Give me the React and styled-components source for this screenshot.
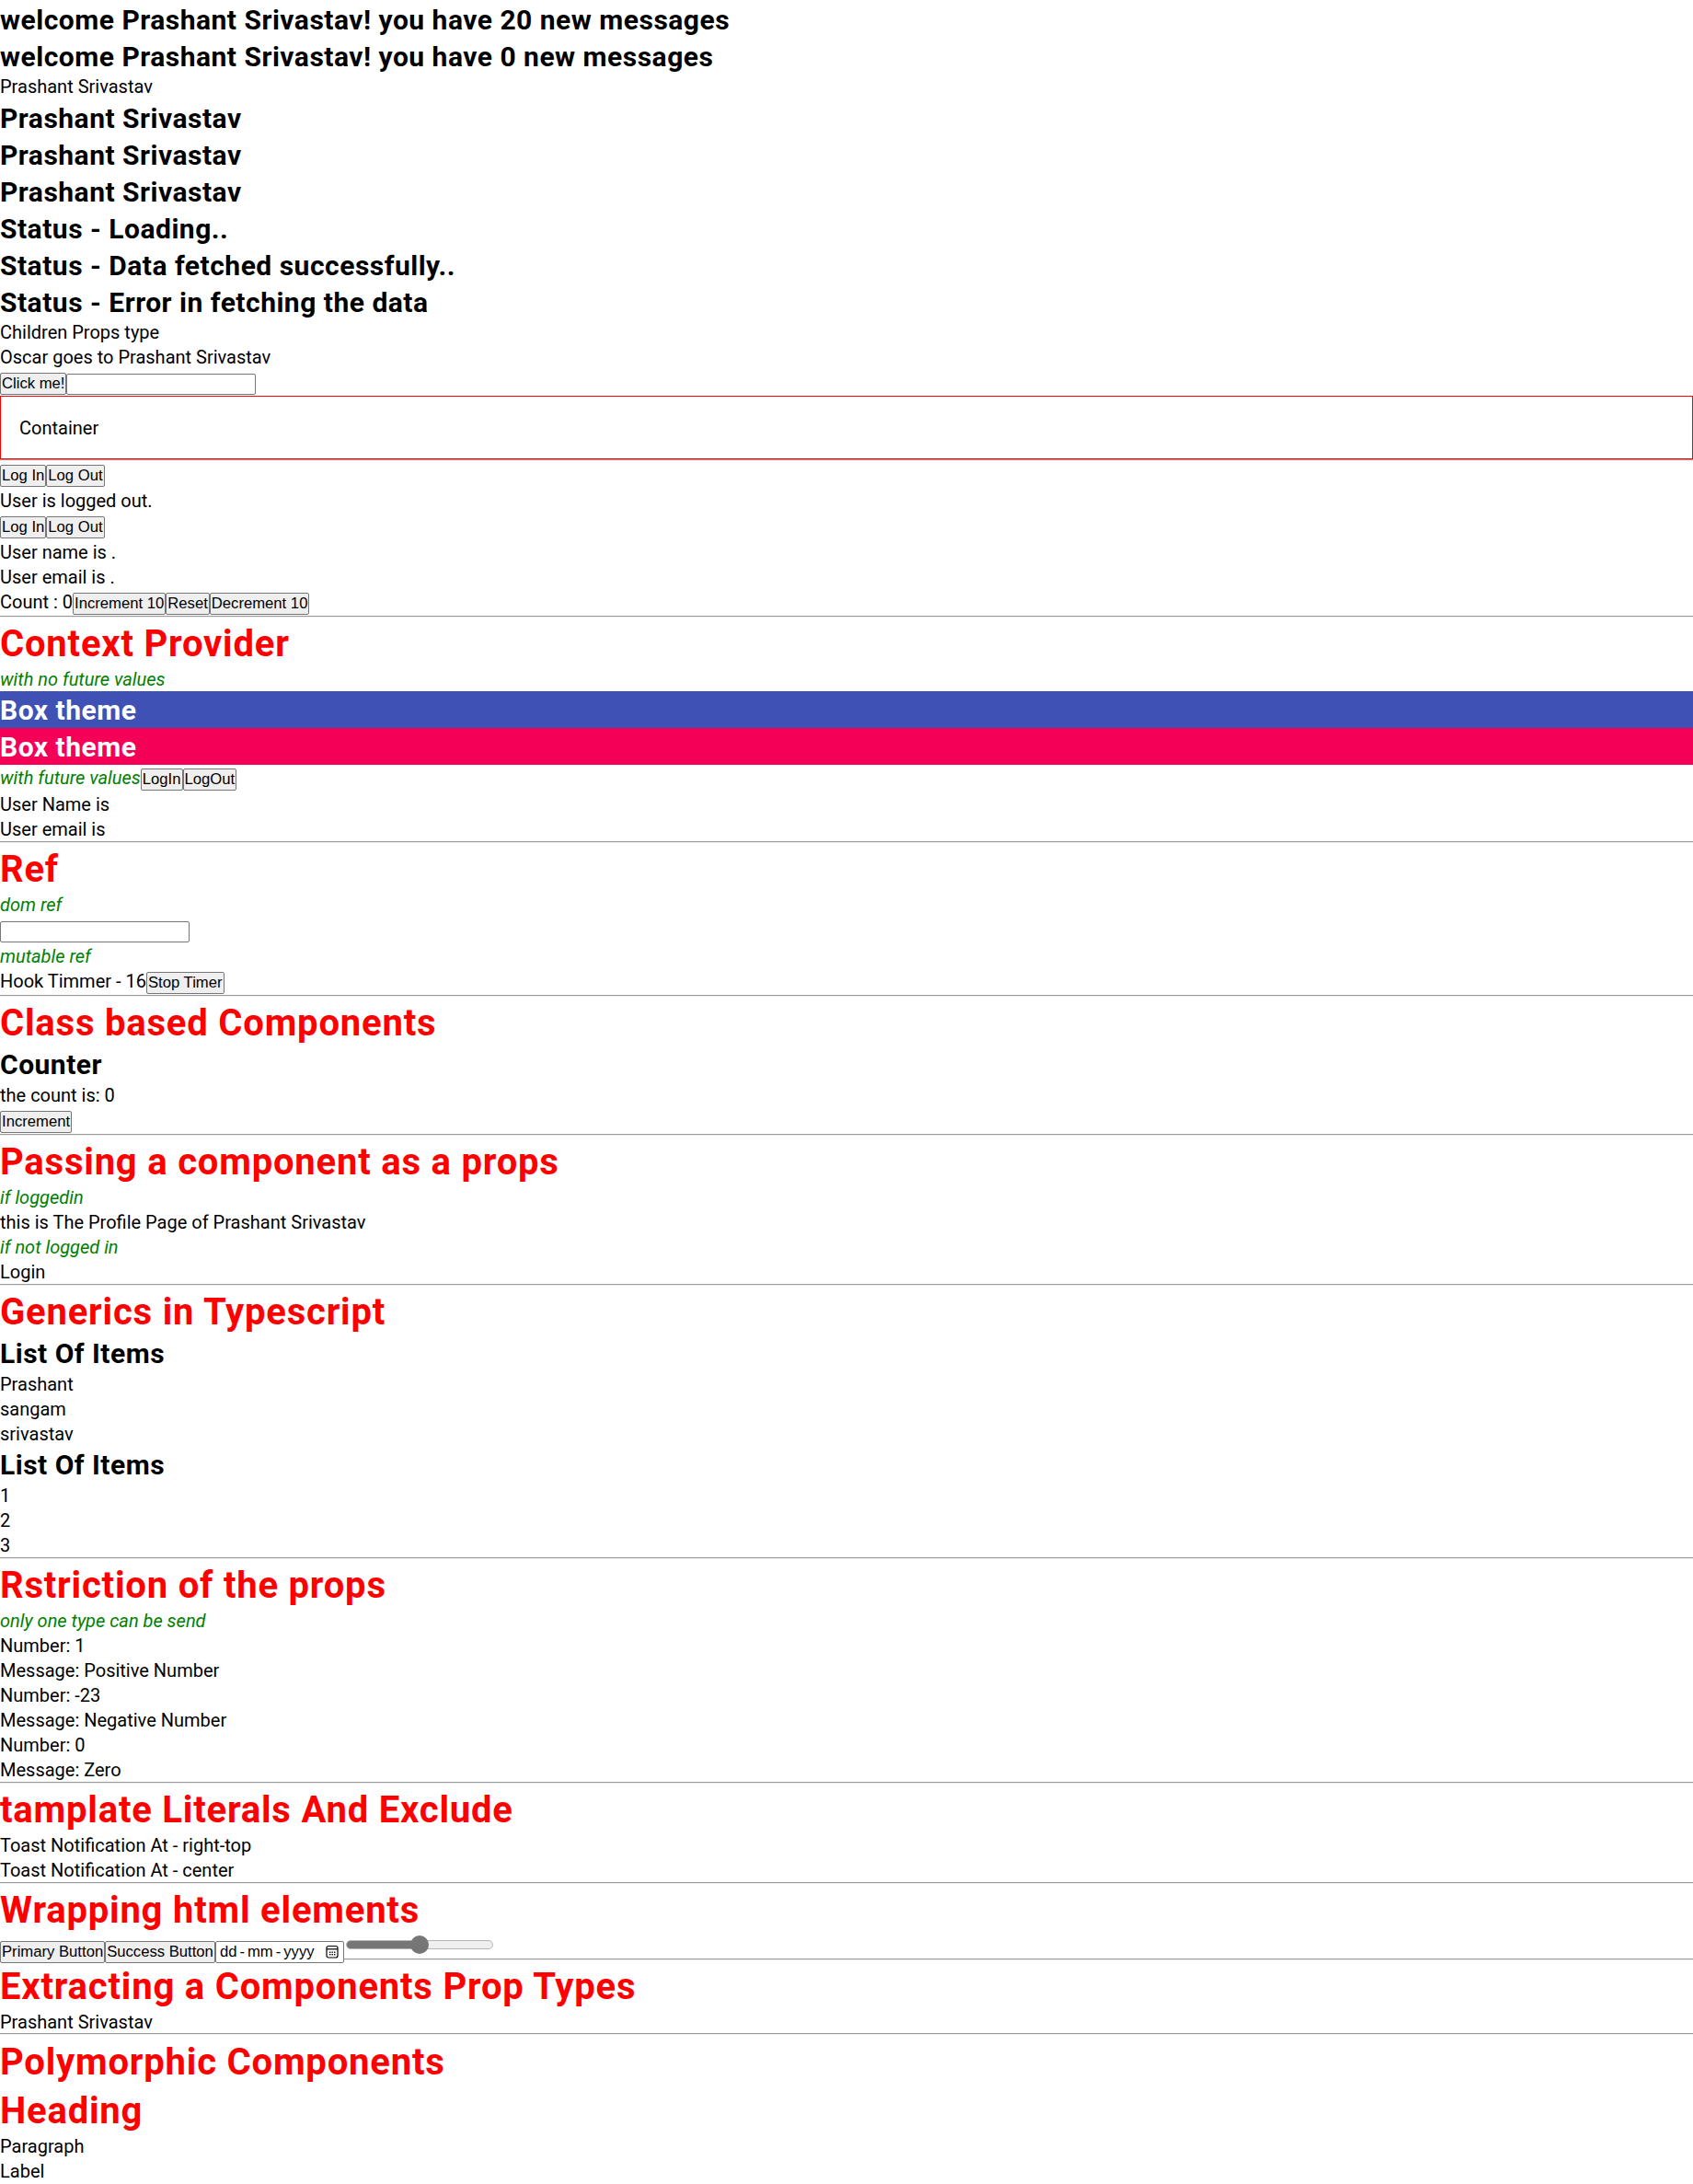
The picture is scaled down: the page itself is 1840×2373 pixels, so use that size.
import React from 'react';
import styled, { createGlobalStyle, css } from 'styled-components';

const fonts = {
  body: '"Roboto", "Liberation Sans", sans-serif',
  control: '"Liberation Sans", Arial, sans-serif',
};

const colors = {
  red: '#ff0000',
  green: '#008000',
  border: '#767676',
  buttonFace: '#efefef',
  primary: '#3f51b5',
  secondary: '#f50057',
};

// keeps the line box height but drops the baseline a little lower,
// the reference font sits lower in its line than Roboto does
const lineBox = (height, shift) => css`
  padding-top: ${shift}px;
  line-height: ${height - shift}px;
`;

const GlobalStyle = createGlobalStyle`
  * {
    margin: 0;
    padding: 0;
    box-sizing: border-box;
  }
  body {
    font-family: ${fonts.body};
    font-size: 20px;
    line-height: 27px;
    color: #000;
    background: #fff;
  }
`;

const Page = styled.main`
  display: block;
  width: 100%;
`;

const SectionTitle = styled.h1`
  font-size: 40px;
  ${lineBox(53, 5.6)}
  font-weight: 700;
  letter-spacing: 0.8px;
  color: ${colors.red};
`;

const Title = styled.h2`
  font-size: 30px;
  ${lineBox(40, 3.6)}
  font-weight: 700;
  letter-spacing: 0.5px;
  color: ${(p) => p.$color || '#000'};
`;

const Text = styled.p`
  font-size: 20px;
  ${lineBox(27, 3.2)}
`;

const Note = styled(Text)`
  font-style: italic;
  color: ${colors.green};
`;

const InlineNote = styled.i`
  color: ${colors.green};
`;

const ControlRow = styled.div`
  height: ${(p) => p.$height || 29}px;
  ${lineBox(27, 3.2)}
  white-space: nowrap;
`;

const Button = styled.button`
  font-family: ${fonts.control};
  font-size: 16.67px;
  line-height: normal;
  padding: 1px 1px;
  border: 1px solid ${colors.border};
  border-radius: 2px;
  background: ${colors.buttonFace};
  color: #000;
`;

const TextField = styled.input`
  width: 206px;
  height: 23px;
  border: 1px solid ${colors.border};
  border-radius: 2px;
  font-family: ${fonts.control};
  font-size: 16.67px;
  background: #fff;
`;

const Container = styled.div`
  border: 1px solid ${colors.red};
  padding: 20px;
`;

const Divider = styled.hr`
  border: none;
  height: 2px;
  border-top: 1px solid #9a9a9a;
  border-bottom: 1px solid #eeeeee;
`;

const ThemeBox = styled.div`
  background: ${(p) => p.$bg};
  color: #fff;
`;

const DateField = styled.span`
  display: inline-flex;
  align-items: center;
  justify-content: space-between;
  width: 140px;
  height: 24px;
  padding: 0 5px 0 4px;
  border: 1px solid ${colors.border};
  border-radius: 2px;
  font-family: ${fonts.control};
  font-size: 16.67px;
  line-height: normal;
  background: #fff;
`;

const DateSep = styled.span`
  padding: 0 3px;
`;

const Slider = styled.input`
  -webkit-appearance: none;
  appearance: none;
  width: 160px;
  height: 20px;
  margin: 0 2px;
  background: transparent;
  vertical-align: 3px;

  &::-webkit-slider-runnable-track {
    height: 10px;
    border-radius: 5px;
    border: 1px solid #b5b5b5;
    background: linear-gradient(to right, ${colors.border} 50%, ${colors.buttonFace} 50%);
  }
  &::-webkit-slider-thumb {
    -webkit-appearance: none;
    width: 20px;
    height: 20px;
    margin-top: -6px;
    border-radius: 50%;
    background: ${colors.border};
  }
`;

const CalendarIcon = () => (
  <svg width="14" height="15" viewBox="0 0 14 15" fill="none">
    <rect x="1" y="1.5" width="12" height="12.5" rx="2" stroke="#000" strokeWidth="1.2" />
    <line x1="1" y1="4.8" x2="13" y2="4.8" stroke="#000" strokeWidth="1.2" />
    {[4, 6.5, 9].map((x) =>
      [7.5, 10].map((y) => <rect key={`${x}-${y}`} x={x} y={y} width="1.4" height="1.4" fill="#000" />)
    )}
  </svg>
);

const App = () => {
  return (
    <>
      <GlobalStyle />
      <Page>
        <Title>welcome Prashant Srivastav! you have 20 new messages</Title>
        <Title>welcome Prashant Srivastav! you have 0 new messages</Title>
        <Text>Prashant Srivastav</Text>
        <Title>Prashant Srivastav</Title>
        <Title>Prashant Srivastav</Title>
        <Title>Prashant Srivastav</Title>
        <Title>Status - Loading..</Title>
        <Title>Status - Data fetched successfully..</Title>
        <Title>Status - Error in fetching the data</Title>
        <Text>Children Props type</Text>
        <Text>Oscar goes to Prashant Srivastav</Text>
        <ControlRow>
          <Button>Click me!</Button>
          <TextField type="text" />
        </ControlRow>
        <Container>
          <Text>Container</Text>
        </Container>
        <Divider />

        <ControlRow>
          <Button>Log In</Button>
          <Button>Log Out</Button>
        </ControlRow>
        <Text>User is logged out.</Text>
        <ControlRow>
          <Button>Log In</Button>
          <Button>Log Out</Button>
        </ControlRow>
        <Text>User name is .</Text>
        <Text>User email is .</Text>
        <ControlRow>
          Count : 0<Button>Increment 10</Button>
          <Button>Reset</Button>
          <Button>Decrement 10</Button>
        </ControlRow>
        <Divider />

        <SectionTitle>Context Provider</SectionTitle>
        <Note>with no future values</Note>
        <ThemeBox $bg={colors.primary}>
          <Title $color="#fff">Box theme</Title>
        </ThemeBox>
        <ThemeBox $bg={colors.secondary}>
          <Title $color="#fff">Box theme</Title>
        </ThemeBox>
        <ControlRow>
          <InlineNote>with future values</InlineNote>
          <Button>LogIn</Button>
          <Button>LogOut</Button>
        </ControlRow>
        <Text>User Name is</Text>
        <Text>User email is</Text>
        <Divider />

        <SectionTitle>Ref</SectionTitle>
        <Note>dom ref</Note>
        <ControlRow>
          <TextField type="text" />
        </ControlRow>
        <Note>mutable ref</Note>
        <ControlRow>
          Hook Timmer - 16<Button>Stop Timer</Button>
        </ControlRow>
        <Divider />

        <SectionTitle>Class based Components</SectionTitle>
        <Title>Counter</Title>
        <Text>the count is: 0</Text>
        <ControlRow>
          <Button>Increment</Button>
        </ControlRow>
        <Divider />

        <SectionTitle>Passing a component as a props</SectionTitle>
        <Note>if loggedin</Note>
        <Text>this is The Profile Page of Prashant Srivastav</Text>
        <Note>if not logged in</Note>
        <Text>Login</Text>
        <Divider />

        <SectionTitle>Generics in Typescript</SectionTitle>
        <Title>List Of Items</Title>
        <Text>Prashant</Text>
        <Text>sangam</Text>
        <Text>srivastav</Text>
        <Title>List Of Items</Title>
        <Text>1</Text>
        <Text>2</Text>
        <Text>3</Text>
        <Divider />

        <SectionTitle>Rstriction of the props</SectionTitle>
        <Note>only one type can be send</Note>
        <Text>Number: 1</Text>
        <Text>Message: Positive Number</Text>
        <Text>Number: -23</Text>
        <Text>Message: Negative Number</Text>
        <Text>Number: 0</Text>
        <Text>Message: Zero</Text>
        <Divider />

        <SectionTitle>tamplate Literals And Exclude</SectionTitle>
        <Text>Toast Notification At - right-top</Text>
        <Text>Toast Notification At - center</Text>
        <Divider />

        <SectionTitle>Wrapping html elements</SectionTitle>
        <ControlRow $height={28}>
          <Button>Primary Button</Button>
          <Button>Success Button</Button>
          <DateField>
            <span>
              dd<DateSep>-</DateSep>mm<DateSep>-</DateSep>yyyy
            </span>
            <CalendarIcon />
          </DateField>
          <Slider type="range" min="0" max="100" defaultValue="50" />
        </ControlRow>
        <Divider />

        <SectionTitle>Extracting a Components Prop Types</SectionTitle>
        <Text>Prashant Srivastav</Text>
        <Divider />

        <SectionTitle>Polymorphic Components</SectionTitle>
        <SectionTitle>Heading</SectionTitle>
        <Text>Paragraph</Text>
        <Text>Label</Text>
      </Page>
    </>
  );
};

export default App;
